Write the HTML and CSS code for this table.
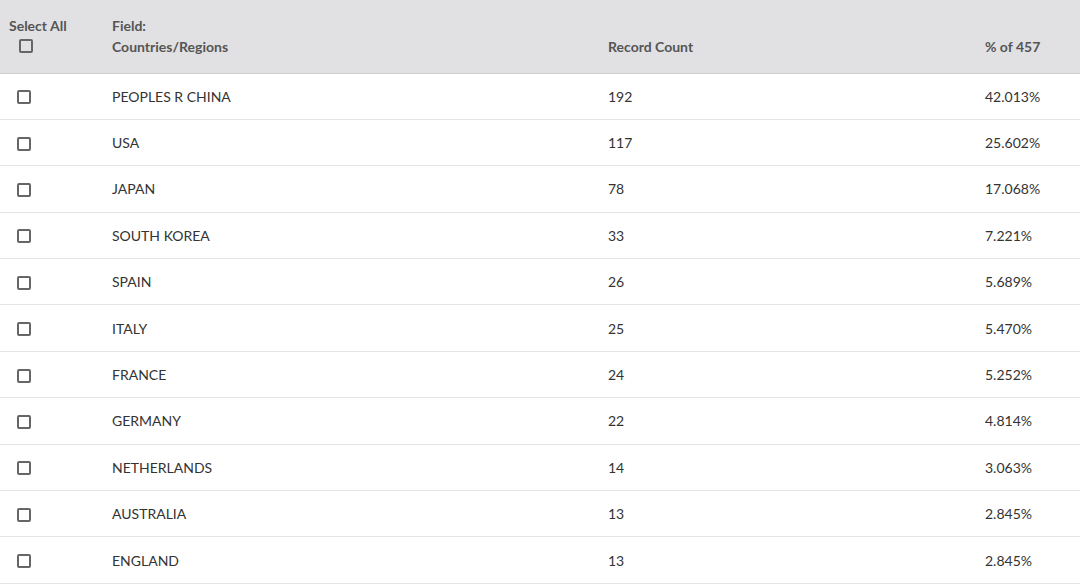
FILE: index.html
```html
<!DOCTYPE html>
<html>
<head>
<meta charset="utf-8">
<link rel="stylesheet" href="styles.css">
</head>
<body>
<table class="results">
  <colgroup>
    <col class="w-sel">
    <col class="w-field">
    <col class="w-count">
    <col class="w-pct">
  </colgroup>
  <thead>
    <tr>
      <th class="c-sel"><div class="sel-all">Select All</div><span class="box hbox"></span></th>
      <th class="c-field">Field:<br>Countries/Regions</th>
      <th class="c-count">Record Count</th>
      <th class="c-pct">% of 457</th>
    </tr>
  </thead>
  <tbody>
    <tr><td class="c-sel"><span class="box"></span></td><td class="c-field">PEOPLES R CHINA</td><td class="c-count">192</td><td class="c-pct">42.013%</td></tr>
    <tr><td class="c-sel"><span class="box"></span></td><td class="c-field">USA</td><td class="c-count">117</td><td class="c-pct">25.602%</td></tr>
    <tr><td class="c-sel"><span class="box"></span></td><td class="c-field">JAPAN</td><td class="c-count">78</td><td class="c-pct">17.068%</td></tr>
    <tr><td class="c-sel"><span class="box"></span></td><td class="c-field">SOUTH KOREA</td><td class="c-count">33</td><td class="c-pct">7.221%</td></tr>
    <tr><td class="c-sel"><span class="box"></span></td><td class="c-field">SPAIN</td><td class="c-count">26</td><td class="c-pct">5.689%</td></tr>
    <tr><td class="c-sel"><span class="box"></span></td><td class="c-field">ITALY</td><td class="c-count">25</td><td class="c-pct">5.470%</td></tr>
    <tr><td class="c-sel"><span class="box"></span></td><td class="c-field">FRANCE</td><td class="c-count">24</td><td class="c-pct">5.252%</td></tr>
    <tr><td class="c-sel"><span class="box"></span></td><td class="c-field">GERMANY</td><td class="c-count">22</td><td class="c-pct">4.814%</td></tr>
    <tr><td class="c-sel"><span class="box"></span></td><td class="c-field">NETHERLANDS</td><td class="c-count">14</td><td class="c-pct">3.063%</td></tr>
    <tr><td class="c-sel"><span class="box"></span></td><td class="c-field">AUSTRALIA</td><td class="c-count">13</td><td class="c-pct">2.845%</td></tr>
    <tr><td class="c-sel"><span class="box"></span></td><td class="c-field">ENGLAND</td><td class="c-count">13</td><td class="c-pct">2.845%</td></tr>
  </tbody>
</table>
</body>
</html>
```
FILE: styles.css
```css
html, body {
  margin: 0;
  padding: 0;
  background: #ffffff;
}
body {
  font-family: "Lato", "Liberation Sans", sans-serif;
  color: #333333;
  font-size: 14px;
}
.results {
  width: 1080px;
  border-collapse: collapse;
  table-layout: fixed;
}
.w-sel { width: 112px; }
.w-field { width: 496px; }
.w-count { width: 377px; }
.w-pct { width: 95px; }
.results thead tr {
  background: #e1e1e3;
  height: 73px;
  border-bottom: 1px solid #cfcfd1;
}
.results th {
  font-weight: 700;
  color: #555555;
  text-align: left;
  vertical-align: top;
  padding: 15px 0 0 0;
  line-height: 21px;
  font-size: 14px;
}
.results th.c-sel {
  padding: 17px 0 0 9px;
}
.results th.c-count, .results th.c-pct {
  padding-top: 36px;
}
.sel-all { line-height: 17px; }
.results tbody tr {
  height: 46.4px;
  border-bottom: 1px solid #e4e4e6;
}
.results td {
  padding: 1px 0 0 0;
  vertical-align: middle;
  line-height: 18px;
}
.results td.c-sel { padding-left: 17px; }
.box {
  display: block;
  width: 10px;
  height: 10px;
  border: 2px solid #666666;
  border-radius: 2px;
  box-sizing: content-box;
}
.results td .box { margin-top: 1px; }
.hbox {
  margin: 5px 0 0 10px;
}
```
